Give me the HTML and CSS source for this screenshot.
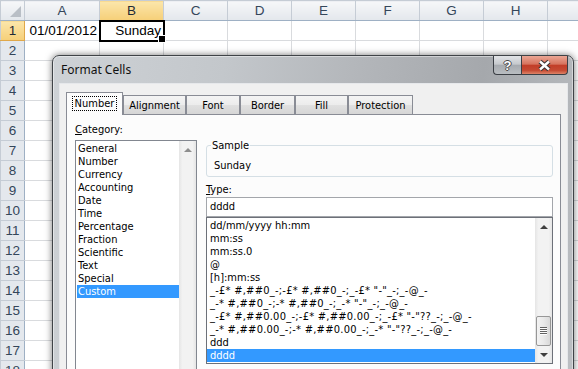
FILE: index.html
```html
<!DOCTYPE html>
<html lang="en">

<head>
    <meta charset="UTF-8">
    <meta name="viewport" content="width=device-width, initial-scale=1.0">
    <title>Format Cells</title>
    <link rel="stylesheet" href="styles.css">
</head>

<body>
    <!-- worksheet behind the dialog -->
    <table class="sheet">
        <colgroup>
            <col class="col-hdr">
            <col class="col-a">
            <col><col><col><col><col><col><col><col>
        </colgroup>
        <thead>
            <tr>
                <th class="corner"></th>
                <th>A</th><th class="sel">B</th><th>C</th><th>D</th><th>E</th><th>F</th><th>G</th><th>H</th><th></th>
            </tr>
        </thead>
        <tbody>
            <tr><th class="sel">1</th><td class="num">01/01/2012</td><td class="num active">Sunday</td><td></td><td></td><td></td><td></td><td></td><td></td><td></td></tr>
            <tr><th>2</th><td></td><td></td><td></td><td></td><td></td><td></td><td></td><td></td><td></td></tr>
            <tr><th>3</th><td></td><td></td><td></td><td></td><td></td><td></td><td></td><td></td><td></td></tr>
            <tr><th>4</th><td></td><td></td><td></td><td></td><td></td><td></td><td></td><td></td><td></td></tr>
            <tr><th>5</th><td></td><td></td><td></td><td></td><td></td><td></td><td></td><td></td><td></td></tr>
            <tr><th>6</th><td></td><td></td><td></td><td></td><td></td><td></td><td></td><td></td><td></td></tr>
            <tr><th>7</th><td></td><td></td><td></td><td></td><td></td><td></td><td></td><td></td><td></td></tr>
            <tr><th>8</th><td></td><td></td><td></td><td></td><td></td><td></td><td></td><td></td><td></td></tr>
            <tr><th>9</th><td></td><td></td><td></td><td></td><td></td><td></td><td></td><td></td><td></td></tr>
            <tr><th>10</th><td></td><td></td><td></td><td></td><td></td><td></td><td></td><td></td><td></td></tr>
            <tr><th>11</th><td></td><td></td><td></td><td></td><td></td><td></td><td></td><td></td><td></td></tr>
            <tr><th>12</th><td></td><td></td><td></td><td></td><td></td><td></td><td></td><td></td><td></td></tr>
            <tr><th>13</th><td></td><td></td><td></td><td></td><td></td><td></td><td></td><td></td><td></td></tr>
            <tr><th>14</th><td></td><td></td><td></td><td></td><td></td><td></td><td></td><td></td><td></td></tr>
            <tr><th>15</th><td></td><td></td><td></td><td></td><td></td><td></td><td></td><td></td><td></td></tr>
            <tr><th>16</th><td></td><td></td><td></td><td></td><td></td><td></td><td></td><td></td><td></td></tr>
            <tr><th>17</th><td></td><td></td><td></td><td></td><td></td><td></td><td></td><td></td><td></td></tr>
            <tr><th>18</th><td></td><td></td><td></td><td></td><td></td><td></td><td></td><td></td><td></td></tr>
        </tbody>
    </table>

    <!-- Format Cells dialog -->
    <div class="dlg">
        <div class="dlg-bar">
            <span class="dlg-caption">Format Cells</span>
            <div class="dlg-ctrls">
                <span class="ctrl ctrl-help">?</span>
                <span class="ctrl ctrl-close">
                    <svg width="15" height="13" viewBox="0 0 15 13">
                        <path d="M3 2.5 L12 10.5 M12 2.5 L3 10.5" stroke="#3b3434" stroke-width="4.6" />
                        <path d="M3 2.5 L12 10.5 M12 2.5 L3 10.5" stroke="#fff" stroke-width="2.4" />
                    </svg>
                </span>
            </div>
        </div>

        <div class="dlg-body">
            <div class="tabs">
                <span class="tab tab-on"><span class="focus">Number</span></span>
                <span class="tab tab-align">Alignment</span>
                <span class="tab tab-font">Font</span>
                <span class="tab tab-border">Border</span>
                <span class="tab tab-fill">Fill</span>
                <span class="tab tab-prot">Protection</span>
            </div>

            <div class="panel">
                <div class="cat">
                    <div class="lbl"><u>C</u>ategory:</div>
                    <div class="listbox cat-list">
                        <ul class="items">
                            <li>General</li>
                            <li>Number</li>
                            <li>Currency</li>
                            <li>Accounting</li>
                            <li>Date</li>
                            <li>Time</li>
                            <li>Percentage</li>
                            <li>Fraction</li>
                            <li>Scientific</li>
                            <li>Text</li>
                            <li>Special</li>
                            <li class="hi">Custom</li>
                        </ul>
                        <div class="vscroll">
                            <span class="sbtn"><span class="arr-up arr-off"></span></span>
                        </div>
                    </div>
                </div>

                <div class="fmt">
                    <fieldset class="sample">
                        <legend>Sample</legend>
                        <div>Sunday</div>
                    </fieldset>
                    <div class="lbl type-lbl"><u>T</u>ype:</div>
                    <div class="type-input">dddd</div>
                    <div class="listbox type-list">
                        <ul class="items">
                            <li>dd/mm/yyyy hh:mm</li>
                            <li>mm:ss</li>
                            <li>mm:ss.0</li>
                            <li>@</li>
                            <li>[h]:mm:ss</li>
                            <li class="code">_-£* #,##0_-;-£* #,##0_-;_-£* "-"_-;_-@_-</li>
                            <li class="code">_-* #,##0_-;-* #,##0_-;_-* "-"_-;_-@_-</li>
                            <li class="code">_-£* #,##0.00_-;-£* #,##0.00_-;_-£* "-"??_-;_-@_-</li>
                            <li class="code">_-* #,##0.00_-;-* #,##0.00_-;_-* "-"??_-;_-@_-</li>
                            <li>ddd</li>
                            <li class="hi">dddd</li>
                        </ul>
                        <div class="vscroll">
                            <span class="sbtn"><span class="arr-up"></span></span>
                            <span class="track"></span>
                            <span class="thumb"><span class="grip"></span></span>
                            <span class="sbtn"><span class="arr-down"></span></span>
                        </div>
                    </div>
                </div>
            </div>
        </div>
    </div>
</body>

</html>
```

FILE: styles.css
```css
* {
    box-sizing: border-box;
}

body {
    margin: 0;
    width: 578px;
    height: 369px;
    overflow: hidden;
    position: relative;
    background-color: #fff;
}

/* ---------- worksheet ---------- */

.sheet {
    border-collapse: collapse;
    table-layout: fixed;
    width: 611px;
    font: 13.5px "Liberation Sans", Arial, sans-serif;
    color: #000;
}

.sheet col {
    width: 64px;
}

.sheet .col-hdr {
    width: 24px;
}

.sheet .col-a {
    width: 75px;
}

.sheet tr {
    height: 20px;
}

.sheet td {
    border: 1px solid #d9dbde;
    padding: 0 2px;
    white-space: nowrap;
    overflow: visible;
}

.sheet td.num {
    text-align: right;
}

.sheet td.active {
    position: relative;
    outline: 2px solid #000;
    outline-offset: -1px;
}

/* fill handle */
.sheet td.active::after {
    content: "";
    position: absolute;
    right: -3px;
    bottom: -3px;
    width: 6px;
    height: 6px;
    background-color: #000;
    border: 1px solid #fff;
}

.sheet th {
    font-weight: normal;
    font-size: 13.5px;
    color: #34465a;
    text-align: center;
    padding: 0;
    border: 1px solid #c5ccd5;
}

.sheet thead th {
    background: linear-gradient(#f6f7f9, #e3e7ec);
    border-bottom-color: #9eb0c4;
}

.sheet tbody th {
    background-color: #e4e8ed;
    border-right-color: #9eb0c4;
}

.sheet th.sel {
    background: linear-gradient(#fbe6ab, #f6cf78);
    color: #1f2a36;
    border-bottom-color: #e0a84a;
}

.sheet tbody th.sel {
    border-right-color: #e0a84a;
}

.sheet th.corner {
    position: relative;
}

.sheet th.corner::after {
    content: "";
    position: absolute;
    right: 3px;
    bottom: 3px;
    border-left: 11px solid transparent;
    border-bottom: 11px solid #b9bfc6;
}

/* ---------- dialog ---------- */

.dlg {
    position: absolute;
    left: 52px;
    top: 55px;
    width: 522px;
    height: 330px;
    display: flex;
    flex-direction: column;
    padding: 0 5px 0 6px;
    border: 1px solid #3f4347;
    border-radius: 7px 7px 0 0;
    background: linear-gradient(100deg, #ced2d6 0%, #c3c7cb 30%, #b2b5b9 55%, #a5a8ac 75%, #bcbfc3 100%);
    box-shadow: 0 0 7px rgba(0, 0, 0, 0.55), inset 0 0 0 1px rgba(255, 255, 255, 0.45);
    font: 11px "DejaVu Sans Condensed", "Liberation Sans", sans-serif;
    color: #000;
}

.dlg-bar {
    display: flex;
    align-items: flex-start;
    height: 27px;
}

.dlg-caption {
    margin: 6px 0 0 2px;
    font: 12px/15px "Noto Sans", "Liberation Sans", sans-serif;
    color: #101010;
}

.dlg-ctrls {
    display: flex;
    margin-left: auto;
}

.ctrl {
    display: flex;
    align-items: center;
    justify-content: center;
    height: 19px;
    border: 1px solid #3b3f45;
    border-top: none;
}

.ctrl-help {
    width: 28px;
    border-right: none;
    border-radius: 0 0 0 4px;
    background: linear-gradient(#e2e4e7, #c6c9cd 45%, #a7abb0 52%, #b9bdc1);
    font: bold 13px "Liberation Sans", Arial, sans-serif;
    color: #fff;
    text-shadow: 1px 0 #4a4a4a, -1px 0 #4a4a4a, 0 1px #4a4a4a, 0 -1px #4a4a4a;
}

.ctrl-close {
    width: 47px;
    border-radius: 0 0 4px 0;
    background: linear-gradient(#eba795, #d6735e 45%, #c23e28 52%, #c54a33 80%, #de8468);
}

.dlg-body {
    flex: 1;
    display: flex;
    flex-direction: column;
    padding: 0 7px;
    background-color: #f0f0f0;
    box-shadow: inset 0 0 0 1px #e6e8eb;
}

/* tabs */

.tabs {
    display: flex;
    align-items: flex-end;
    height: 23px;
    margin-top: 9px;
    position: relative;
    z-index: 1;
}

.tab {
    display: flex;
    align-items: center;
    justify-content: center;
    height: 19px;
    margin-bottom: 1px;
    border: 1px solid #898c95;
    border-bottom: none;
    background: linear-gradient(#f4f4f4, #ececec 50%, #e0e0e0 52%, #d6d6d6);
}

.tab-on {
    width: 57px;
    height: 23px;
    margin-bottom: 0;
    padding-bottom: 2px;
    background: #fcfcfc;
}

.tab-on .focus {
    padding: 0 2px;
    line-height: 13px;
    outline: 1px dotted #000;
}

.tab-align {
    width: 63px;
}

.tab-font {
    width: 54px;
}

.tab-border {
    width: 55px;
}

.tab-fill {
    width: 53px;
}

.tab-prot {
    width: 65px;
}

/* panel */

.panel {
    flex: 1;
    display: flex;
    gap: 9px;
    width: 495px;
    margin-top: -1px;
    padding: 8px 0 0 8px;
    border: 1px solid #898c95;
    border-bottom: none;
    background-color: #fcfcfc;
}

.lbl {
    line-height: 13px;
}

.cat .lbl {
    margin-bottom: 4px;
}

.listbox {
    display: flex;
    border: 1px solid #828790;
    background-color: #fff;
}

.items {
    flex: 1;
    margin: 0;
    padding: 1px 0 0;
    list-style: none;
    white-space: nowrap;
    overflow: hidden;
}

.items li {
    line-height: 13px;
    padding-left: 3px;
}

.items li.code {
    letter-spacing: 0.25px;
}

.items li.hi {
    background-color: #3399ff;
    color: #fff;
}

.cat-list {
    width: 122px;
    height: 235px;
}

.cat-list .items {
    margin-left: 1px;
}

.cat-list .items li {
    padding-left: 1px;
}

.vscroll {
    display: flex;
    flex-direction: column;
    width: 17px;
    background: linear-gradient(to right, #e5e5e5, #f2f2f2 20%, #f2f2f2 80%, #e5e5e5);
}

.sbtn {
    display: flex;
    align-items: center;
    justify-content: center;
    height: 17px;
}

.arr-up {
    border-left: 4px solid transparent;
    border-right: 4px solid transparent;
    border-bottom: 4px solid #404040;
}

.arr-down {
    border-left: 4px solid transparent;
    border-right: 4px solid transparent;
    border-top: 4px solid #404040;
}

.arr-up.arr-off {
    border-bottom-color: #8e8e8e;
}

.track {
    flex: 1;
}

.thumb {
    display: flex;
    align-items: center;
    justify-content: center;
    height: 30px;
    margin: 0 1px;
    border: 1px solid #979797;
    border-radius: 2px;
    background: linear-gradient(to right, #f3f3f3, #e9e9e9 50%, #d9d9d9);
}

.grip {
    width: 7px;
    height: 8px;
    background: repeating-linear-gradient(#626262 0 1px, #fdfdfd 1px 2px);
}

/* format side */

.fmt {
    width: 347px;
}

.sample {
    margin: 16px 0 0;
    padding: 7px 6px 4px 7px;
    min-width: 0;
    border: 1px solid #d5dfe5;
    border-radius: 3px;
    line-height: 13px;
}

.sample legend {
    margin-left: -3px;
    padding: 0 1px;
    line-height: 13px;
}

.type-lbl {
    margin-top: 6px;
}

.type-input {
    height: 20px;
    margin-top: 1px;
    padding-left: 3px;
    line-height: 18px;
    border: 1px solid #a3a6ab;
    background-color: #fff;
}

.type-list {
    height: 147px;
    border-color: #6c7078;
}
```
